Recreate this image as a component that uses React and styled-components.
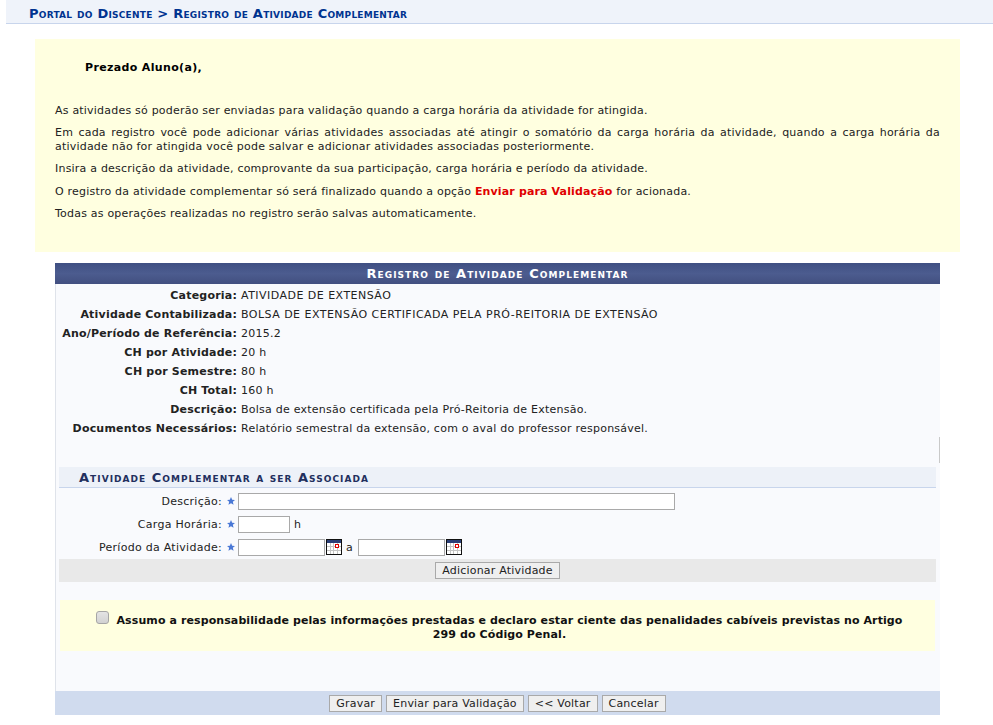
import React from 'react'
import styled, { createGlobalStyle } from 'styled-components'

const GlobalStyle = createGlobalStyle`
  html, body {
    margin: 0;
    padding: 0;
    background: #fff;
  }
  body {
    font-family: "DejaVu Sans", Verdana, sans-serif;
    font-size: 11px;
    letter-spacing: 0.21px;
    color: #222;
  }
`

const Page = styled.div`
  width: 993px;
  height: 725px;
  overflow: hidden;
`

const Crumb = styled.h2`
  margin: 0 0 0 6px;
  height: 23px;
  box-sizing: content-box;
  padding-left: 23px;
  background: #eff3fa;
  border-bottom: 1px solid #c8d5ec;
  color: #003390;
  font-size: 13px;
  letter-spacing: 0.24px;
  line-height: 28px;
  font-weight: bold;
  font-variant: small-caps;
  white-space: nowrap;
`

const Notice = styled.div`
  margin: 15px 33px 0 35px;
  height: 213px;
  box-sizing: border-box;
  padding: 22px 20px 0 20px;
  background: #ffffe0;
  color: #222;
  p {
    margin: 0 0 9px 0;
    line-height: 13.5px;
    text-align: justify;
  }
`

const Greeting = styled.div`
  margin: 0 0 28.5px 30px;
  font-weight: bold;
  letter-spacing: 0.35px;
  color: #000;
  line-height: 14px;
`

const Red = styled.b`
  color: #e00000;
  letter-spacing: 0.14px;
`

const Form = styled.div`
  margin: 11px 53px 0 55px;
  height: 452px;
  background: #f9fafd;
  box-sizing: border-box;
  border-left: 1px solid #dfe3ea;
  position: relative;
  display: flex;
  flex-direction: column;
`

const EdgeMark = styled.div`
  position: absolute;
  top: 174px;
  right: 0;
  width: 1px;
  height: 26px;
  background: #c9c9c9;
`

const Caption = styled.div`
  margin-left: -1px;
  height: 21px;
  background: linear-gradient(#3f4f82, #4c5c8f 50%, #424f80);
  color: #fff;
  text-align: center;
  font-weight: bold;
  font-size: 13px;
  letter-spacing: 1.07px;
  font-variant: small-caps;
  line-height: 22px;
`

const Details = styled.div`
  display: grid;
  grid-template-columns: 181px 1fr;
  column-gap: 4px;
  grid-auto-rows: 19px;
  padding-top: 2px;
  line-height: 19px;
  height: 181px;
`

const Term = styled.div`
  font-weight: bold;
  text-align: right;
  letter-spacing: 0.2px;
  color: #222;
  white-space: nowrap;
`

const Def = styled.div`
  color: #222;
  white-space: nowrap;
  letter-spacing: ${p => (p.$caps ? '0.47px' : '0.24px')};
`

const SubHeader = styled.div`
  margin: 0 4px 0 3px;
  height: 20px;
  padding-left: 20px;
  background: #edf1f8;
  border-bottom: 1px solid #c8d5ec;
  color: #222f5e;
  font-weight: bold;
  font-size: 13px;
  letter-spacing: 1.03px;
  font-variant: small-caps;
  line-height: 22px;
`

const Rows = styled.div`
  padding-top: 3px;
  display: flex;
  flex-direction: column;
  gap: 3px;
`

const Row = styled.div`
  display: flex;
  align-items: center;
  height: 20px;
`

const Label = styled.label`
  width: 166px;
  text-align: right;
  letter-spacing: 0.28px;
  color: #222;
  flex: none;
`

const Star = styled.svg`
  width: 8px;
  height: 8px;
  margin: 0 3px 0 5px;
  flex: none;
`

const Input = styled.input`
  width: ${p => p.$w}px;
  height: 17px;
  box-sizing: border-box;
  margin: 0;
  padding: 0 2px;
  background: #fff;
  border: 1px solid #a9a9a9;
  outline: none;
`

const Sep = styled.span`
  margin: 0 5px 0 4px;
  color: #222;
`

const CalIcon = styled.svg`
  width: 16px;
  height: 16px;
  margin-left: 1px;
  flex: none;
`

const AddBar = styled.div`
  margin: 2px 4px 0 3px;
  height: 23px;
  background: #e9e9e9;
  display: flex;
  align-items: center;
  justify-content: center;
`

const Button = styled.button`
  height: 17px;
  box-sizing: border-box;
  margin: 0;
  padding: 0 6px;
  background: #efefef;
  border: 1px solid #a9a9a9;
  border-radius: 0;
  color: #222;
  font-family: "DejaVu Sans", Verdana, sans-serif;
  font-size: 11px;
  letter-spacing: 0.2px;
  line-height: 15px;
  white-space: nowrap;
`

const Terms = styled.div`
  margin: 18px 5px 0 4px;
  height: 51px;
  box-sizing: border-box;
  padding: 14px 28px 0 32px;
  background: #ffffe0;
  font-weight: bold;
  letter-spacing: 0.1px;
  color: #111;
  line-height: 14px;
  text-align: center;
`

const Check = styled.span`
  display: inline-block;
  width: 11px;
  height: 11px;
  margin: -3px 7px 0 0;
  border: 1px solid #a6a6a6;
  border-radius: 3px;
  background: linear-gradient(#e4e4e4, #d2d2d2);
`

const Footer = styled.div`
  margin: auto 0 0 -1px;
  height: 24px;
  background: #d0dbee;
  display: flex;
  align-items: center;
  justify-content: center;
  gap: 4px;
`

const details = [
  ['Categoria:', 'ATIVIDADE DE EXTENSÃO', true],
  ['Atividade Contabilizada:', 'BOLSA DE EXTENSÃO CERTIFICADA PELA PRÓ-REITORIA DE EXTENSÃO', true],
  ['Ano/Período de Referência:', '2015.2'],
  ['CH por Atividade:', '20 h'],
  ['CH por Semestre:', '80 h'],
  ['CH Total:', '160 h'],
  ['Descrição:', 'Bolsa de extensão certificada pela Pró-Reitoria de Extensão.'],
  ['Documentos Necessários:', 'Relatório semestral da extensão, com o aval do professor responsável.'],
]

const Required = () => (
  <Star viewBox="0 0 10 10">
    <path d="M5 0l1.5 3.4 3.5.3-2.7 2.3.9 3.6L5 7.7 1.8 9.6l.9-3.6L0 3.7l3.5-.3z" fill="#4a78d6" />
  </Star>
)

const Calendar = () => (
  <CalIcon viewBox="0 0 16 16">
    <rect x="0.5" y="0.5" width="15" height="15" fill="#fff" stroke="#111" />
    <rect x="1" y="1" width="14" height="3" fill="#2b3f78" />
    <path d="M4.5 4v11M7.5 4v11M11.5 4v11M1 7.5h14M1 11.5h14" stroke="#c4c4c4" fill="none" />
    <rect x="9.5" y="5.5" width="3" height="3" fill="#fff" stroke="#e00000" />
  </CalIcon>
)

export default function App() {
  return (
    <Page>
      <GlobalStyle />
      <Crumb>Portal do Discente &gt; Registro de Atividade Complementar</Crumb>
      <Notice>
        <Greeting>Prezado Aluno(a),</Greeting>
        <p>As atividades só poderão ser enviadas para validação quando a carga horária da atividade for atingida.</p>
        <p>
          Em cada registro você pode adicionar várias atividades associadas até atingir o somatório da carga horária da
          atividade, quando a carga horária da atividade não for atingida você pode salvar e adicionar atividades
          associadas posteriormente.
        </p>
        <p>Insira a descrição da atividade, comprovante da sua participação, carga horária e período da atividade.</p>
        <p>
          O registro da atividade complementar só será finalizado quando a opção <Red>Enviar para Validação</Red> for
          acionada.
        </p>
        <p>Todas as operações realizadas no registro serão salvas automaticamente.</p>
      </Notice>
      <Form>
        <EdgeMark />
        <Caption>Registro de Atividade Complementar</Caption>
        <Details>
          {details.map(([term, value, caps]) => (
            <React.Fragment key={term}>
              <Term>{term}</Term>
              <Def $caps={caps}>{value}</Def>
            </React.Fragment>
          ))}
        </Details>
        <SubHeader>Atividade Complementar a ser Associada</SubHeader>
        <Rows>
          <Row>
            <Label>Descrição:</Label>
            <Required />
            <Input $w={437} />
          </Row>
          <Row>
            <Label>Carga Horária:</Label>
            <Required />
            <Input $w={52} />
            <Sep>h</Sep>
          </Row>
          <Row>
            <Label>Período da Atividade:</Label>
            <Required />
            <Input $w={87} />
            <Calendar />
            <Sep>a</Sep>
            <Input $w={87} />
            <Calendar />
          </Row>
        </Rows>
        <AddBar>
          <Button>Adicionar Atividade</Button>
        </AddBar>
        <Terms>
          <Check />
          Assumo a responsabilidade pelas informações prestadas e declaro estar ciente das penalidades cabíveis
          previstas no Artigo 299 do Código Penal.
        </Terms>
        <Footer>
          <Button>Gravar</Button>
          <Button>Enviar para Validação</Button>
          <Button>&lt;&lt; Voltar</Button>
          <Button>Cancelar</Button>
        </Footer>
      </Form>
    </Page>
  )
}
